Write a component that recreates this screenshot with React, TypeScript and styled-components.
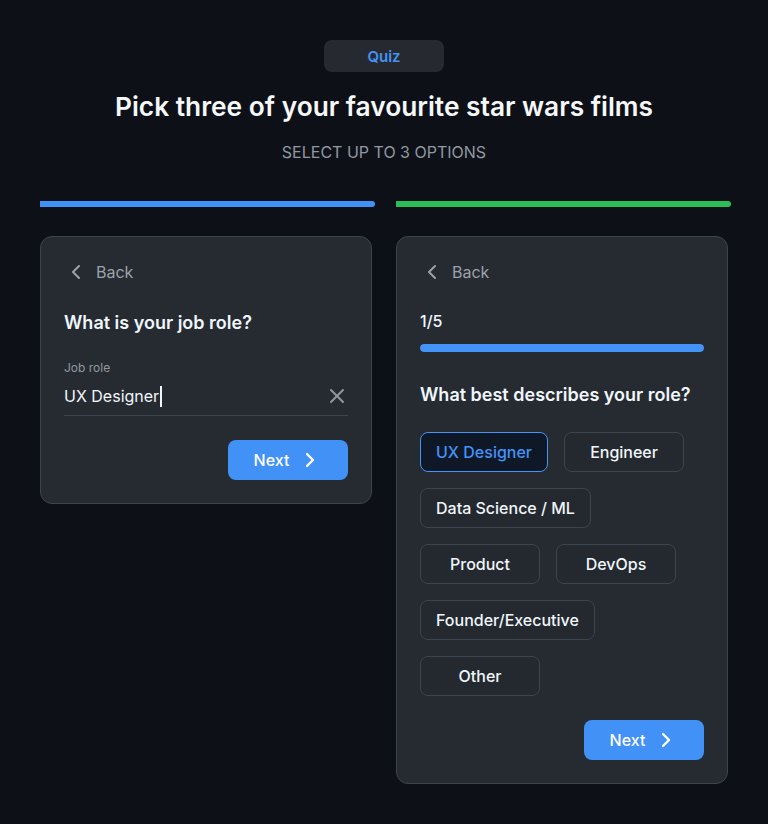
import React from "react";
import styled, { createGlobalStyle } from "styled-components";
import { ChevronLeft, ChevronRight, X } from "lucide-react";

const GlobalStyle = createGlobalStyle`
  html, body {
    margin: 0;
    padding: 0;
    background: #0d1117;
  }
  body {
    font-family: Inter, "Noto Sans", "Liberation Sans", sans-serif;
    color: #f0f6fc;
    -webkit-font-smoothing: antialiased;
  }
  * { box-sizing: border-box; }
`;

const Page = styled.div`
  width: 768px;
  min-height: 824px;
  padding: 40px 40px 40px;
`;

const Header = styled.header`
  display: flex;
  flex-direction: column;
  align-items: center;
`;

const Badge = styled.div`
  width: 120px;
  height: 32px;
  border-radius: 8px;
  background: #262a30;
  color: #4493f8;
  font-size: 15px;
  font-weight: 600;
  display: flex;
  align-items: center;
  justify-content: center;
`;

const Title = styled.h1`
  margin: 17px 0 0;
  font-size: 26.3px;
  line-height: 36px;
  font-weight: 600;
  color: #f6f8fa;
`;

const Subtitle = styled.p`
  margin: 15px 0 0;
  font-size: 16px;
  line-height: 24px;
  color: #9198a1;
  text-transform: uppercase;
`;

const BarsRow = styled.div`
  display: flex;
  gap: 21px;
  margin-top: 37px;
  width: 691px;
`;

const Bar = styled.div<{ $color: string }>`
  width: 335px;
  height: 6px;
  background: ${(p) => p.$color};
  border-radius: 0 3px 3px 0;
`;

const CardsRow = styled.div`
  display: flex;
  gap: 24px;
  align-items: flex-start;
  margin-top: 29px;
`;

const Card = styled.section`
  width: 332px;
  background: #262b31;
  border: 1px solid #3d444d;
  border-radius: 12px;
  padding: 23px;
  display: flex;
  flex-direction: column;
`;

const BackRow = styled.button`
  display: flex;
  align-items: center;
  gap: 8px;
  height: 24px;
  padding: 0;
  border: 0;
  background: none;
  color: #9ba2ab;
  font-family: inherit;
  font-size: 16px;
  align-self: flex-start;
  cursor: pointer;
`;

const Heading = styled.h2<{ $top?: number }>`
  margin: ${(p) => p.$top ?? 24}px 0 0;
  font-size: 18px;
  line-height: 28px;
  font-weight: 600;
  color: #f0f6fc;
`;

const Field = styled.div`
  margin-top: 23px;
  display: flex;
  flex-direction: column;
`;

const Label = styled.label`
  font-size: 12px;
  line-height: 16px;
  color: #9198a1;
`;

const InputRow = styled.div`
  margin-top: 2px;
  height: 38px;
  display: flex;
  align-items: center;
  justify-content: space-between;
  border-bottom: 1px solid #3d444d;
  padding-bottom: 1px;
`;

const InputValue = styled.span`
  display: flex;
  align-items: center;
  font-size: 16px;
  color: #f0f6fc;
`;

const Caret = styled.span`
  display: inline-block;
  width: 1.5px;
  height: 21px;
  background: #f0f6fc;
  margin-left: 1px;
`;

const ClearButton = styled.button`
  border: 0;
  background: none;
  padding: 0;
  color: #9198a1;
  display: flex;
  margin-right: -1px;
`;

const Actions = styled.div`
  margin-top: 24px;
  display: flex;
  justify-content: flex-end;
`;

const PrimaryButton = styled.button`
  width: 120px;
  height: 40px;
  border: 0;
  border-radius: 8px;
  background: #4191f6;
  color: #ffffff;
  font-family: inherit;
  font-size: 16px;
  font-weight: 500;
  display: flex;
  align-items: center;
  justify-content: center;
  gap: 9px;
  padding: 0;
`;

const Counter = styled.div`
  margin-top: 25px;
  font-size: 16px;
  line-height: 24px;
  font-weight: 500;
  color: #f0f6fc;
`;

const Progress = styled.div`
  margin-top: 11px;
  height: 8px;
  border-radius: 4px;
  background: #3d444d;
  overflow: hidden;
`;

const ProgressFill = styled.div`
  height: 100%;
  background: #4493f8;
  border-radius: 4px;
`;

const Chips = styled.div`
  margin-top: 23px;
  display: flex;
  flex-wrap: wrap;
  gap: 16px;
`;

const Chip = styled.button<{ $selected?: boolean }>`
  min-width: 120px;
  height: 40px;
  padding: 0 15px;
  border-radius: 8px;
  border: 1px solid ${(p) => (p.$selected ? "#4493f8" : "#3d444d")};
  background: ${(p) => (p.$selected ? "#0f1827" : "#24292f")};
  color: ${(p) => (p.$selected ? "#4493f8" : "#f0f6fc")};
  font-family: inherit;
  font-size: 16px;
  font-weight: 500;
  cursor: pointer;
`;

const roles = [
  "UX Designer",
  "Engineer",
  "Data Science / ML",
  "Product",
  "DevOps",
  "Founder/Executive",
  "Other",
];

export default function App() {
  return (
    <>
      <GlobalStyle />
      <Page>
        <Header>
          <Badge>Quiz</Badge>
          <Title>Pick three of your favourite star wars films</Title>
          <Subtitle>Select up to 3 options</Subtitle>
        </Header>
        <BarsRow>
          <Bar $color="#4191f6" />
          <Bar $color="#2dbd58" />
        </BarsRow>
        <CardsRow>
          <Card>
            <BackRow>
              <ChevronLeft size={24} strokeWidth={2} />
              Back
            </BackRow>
            <Heading $top={25}>What is your job role?</Heading>
            <Field>
              <Label>Job role</Label>
              <InputRow>
                <InputValue>
                  UX Designer
                  <Caret />
                </InputValue>
                <ClearButton aria-label="Clear">
                  <X size={24} strokeWidth={2} />
                </ClearButton>
              </InputRow>
            </Field>
            <Actions>
              <PrimaryButton>
                Next
                <ChevronRight size={24} strokeWidth={2.4} />
              </PrimaryButton>
            </Actions>
          </Card>
          <Card>
            <BackRow>
              <ChevronLeft size={24} strokeWidth={2} />
              Back
            </BackRow>
            <Counter>1/5</Counter>
            <Progress>
              <ProgressFill style={{ width: "100%" }} />
            </Progress>
            <Heading $top={29}>What best describes your role?</Heading>
            <Chips>
              {roles.map((r, i) => (
                <Chip key={r} $selected={i === 0}>
                  {r}
                </Chip>
              ))}
            </Chips>
            <Actions>
              <PrimaryButton>
                Next
                <ChevronRight size={24} strokeWidth={2.4} />
              </PrimaryButton>
            </Actions>
          </Card>
        </CardsRow>
      </Page>
    </>
  );
}
